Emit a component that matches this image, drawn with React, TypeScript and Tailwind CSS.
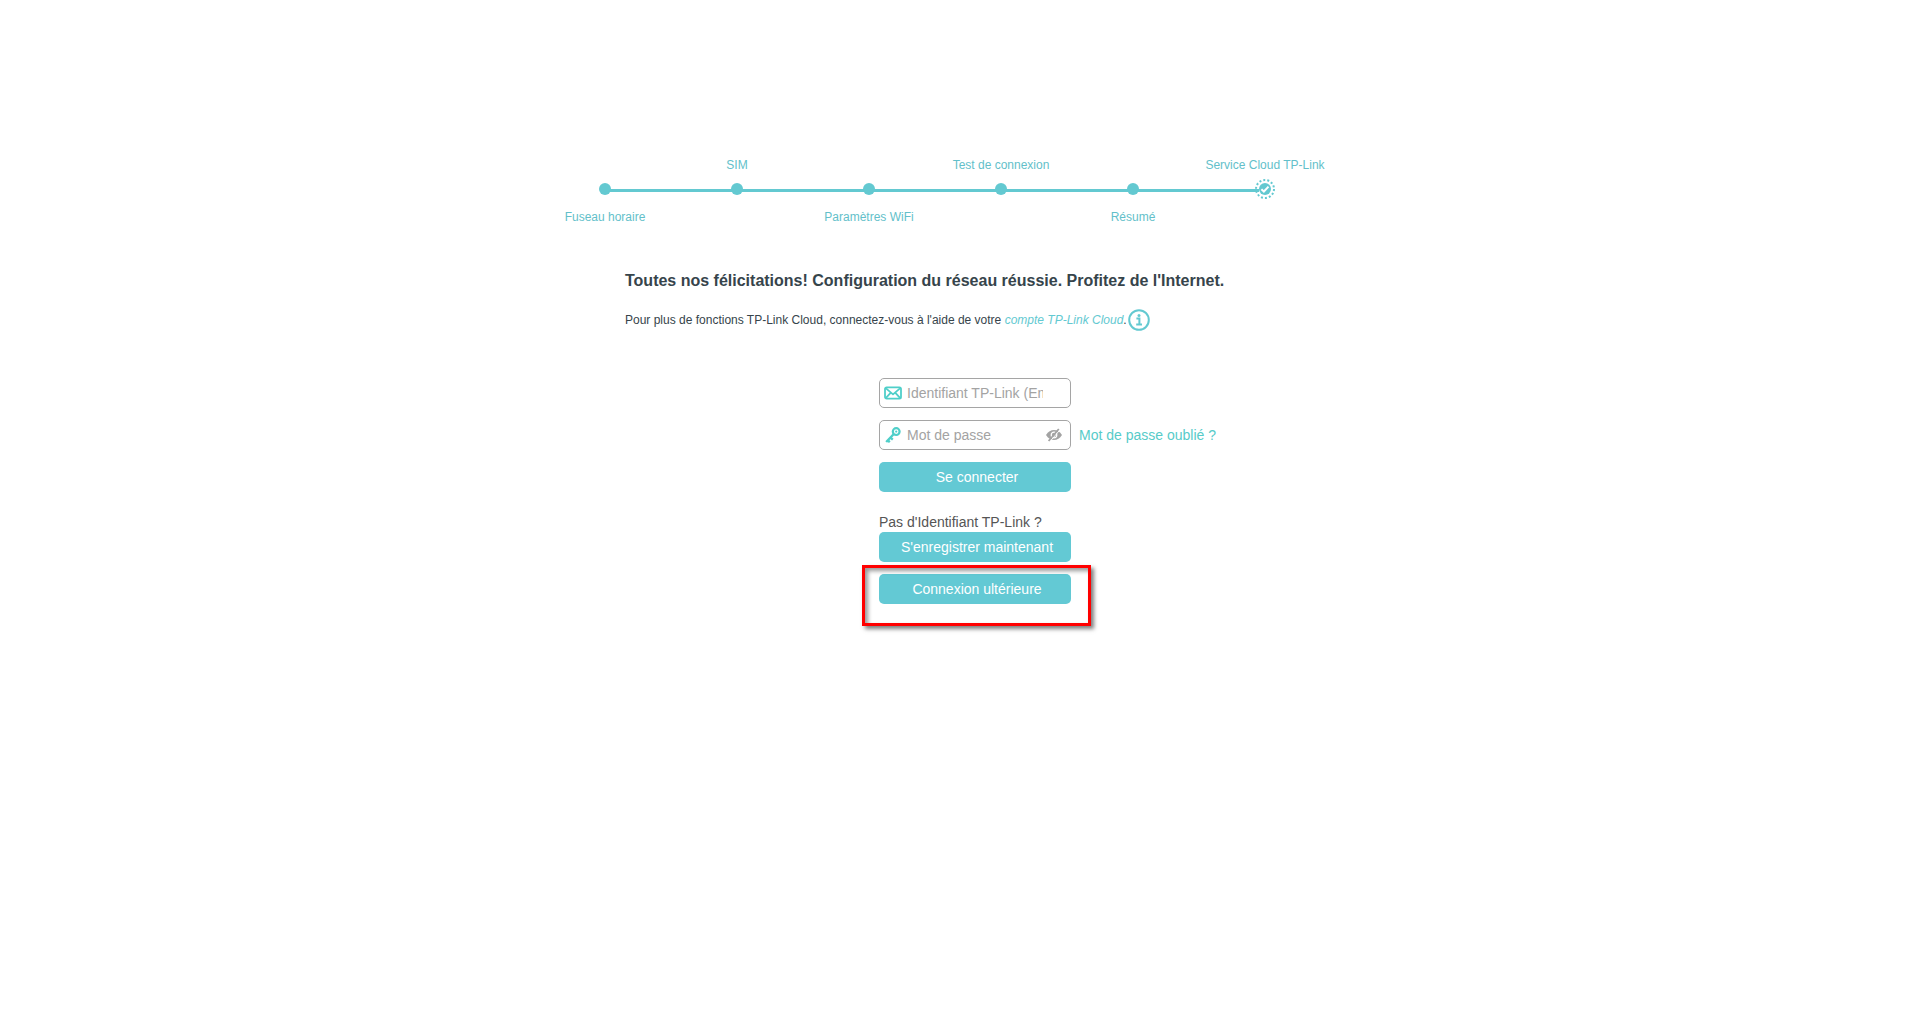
import React from "react";
import clsx from "clsx";

interface Step {
  label: string;
  position: "top" | "bottom";
}

const steps: Step[] = [
  { label: "Fuseau horaire", position: "bottom" },
  { label: "SIM", position: "top" },
  { label: "Paramètres WiFi", position: "bottom" },
  { label: "Test de connexion", position: "top" },
  { label: "Résumé", position: "bottom" },
  { label: "Service Cloud TP-Link", position: "top" },
];

const CurrentDot = () => (
  <svg viewBox="0 0 20 20" className="-mx-1 h-5 w-5 shrink-0" aria-hidden="true">
    <circle
      cx="10"
      cy="10"
      r="9"
      fill="none"
      stroke="#63c9d1"
      strokeWidth="2"
      strokeDasharray="2 2.039"
    />
    <circle cx="10" cy="10" r="6" fill="#63c9d1" />
    <path d="M6.4 10.200l2.500 2.300 4.600-4.900" fill="none" stroke="#fff" strokeWidth="2" />
  </svg>
);

const InfoIcon = () => (
  <svg viewBox="0 0 22 22" className="h-[22px] w-[22px]" aria-hidden="true">
    <circle cx="11" cy="11" r="9.800" fill="none" stroke="#63c9d1" strokeWidth="2" />
    <circle cx="11" cy="6.400" r="1.500" fill="#63c9d1" />
    <path d="M8.400 9.600h3v5.800M8.200 15.400h5.800" fill="none" stroke="#63c9d1" strokeWidth="2" />
  </svg>
);

const MailIcon = () => (
  <svg
    viewBox="0 0 18 14"
    className="h-[14px] w-[18px] shrink-0"
    fill="none"
    stroke="#4fcfc9"
    strokeWidth="1.8"
    strokeLinejoin="round"
    aria-hidden="true"
  >
    <rect x="1" y="1.4" width="16" height="11.2" rx="1.6" />
    <path d="M2 2.4l7 6 7-6M2 11.8l4.6-5M16 11.8l-4.6-5" />
  </svg>
);

const KeyIcon = () => (
  <svg
    viewBox="0 0 18 16"
    className="h-4 w-[18px] shrink-0"
    fill="none"
    stroke="#4fcfc9"
    aria-hidden="true"
  >
    <circle cx="12.2" cy="4.6" r="3.4" strokeWidth="2.2" />
    <circle cx="12.2" cy="4.6" r="1.100" fill="#4fcfc9" stroke="none" />
    <path d="M9.800 7L2.200 15M3.600 13.200l2.200 2M6.400 10.600l2.400 2" strokeWidth="2.400" />
  </svg>
);

const HiddenIcon = () => (
  <svg viewBox="0 0 16 14" className="h-[14px] w-4" fill="none" aria-hidden="true">
    <path d="M0 7C2 3.600 5 2 8 2s6 1.600 8 5c-2 3.400-5 5-8 5S2 10.400 0 7z" fill="#a3a3a3" />
    <circle cx="8" cy="7" r="2.800" stroke="#fff" strokeWidth="1.200" />
    <path d="M4 13.400L14 1.800" stroke="#fff" strokeWidth="1" />
    <path d="M2.600 13L12.800 1" stroke="#a3a3a3" strokeWidth="1.800" />
  </svg>
);

const Stepper: React.FC = () => (
  <ol className="grid grid-cols-6 text-center text-xs leading-5 text-[#63bfca]">
    {steps.map(({ label, position }, i) => {
      const isLast = i === steps.length - 1;
      return (
        <li key={label} className="flex flex-col whitespace-nowrap">
          <span className="h-5">{position === "top" && label}</span>
          <div className="flex h-7 items-center">
            <span className={clsx("mt-[3px] h-[3px] flex-1", i > 0 && "bg-[#63c9d1]")} />
            {isLast ? (
              <CurrentDot />
            ) : (
              <span className="-mx-px h-3 w-3 rounded-full bg-[#63c9d1]" />
            )}
            <span className={clsx("mt-[3px] h-[3px] flex-1", !isLast && "bg-[#63c9d1]")} />
          </div>
          <span className="mt-1 h-5">{position === "bottom" && label}</span>
        </li>
      );
    })}
  </ol>
);

interface CloudButtonProps {
  children: React.ReactNode;
  type?: "button" | "submit";
}

const CloudButton: React.FC<CloudButtonProps> = ({ children, type = "button" }) => (
  <button
    type={type}
    className="block h-[30px] w-full cursor-pointer rounded-[5px] bg-[#63c9d4] pl-1 text-white"
  >
    {children}
  </button>
);

const fieldClass =
  "flex h-[30px] w-full items-center gap-[5px] rounded-[5px] border border-[#a5a5a5] bg-white pl-1";

const inputClass =
  "w-[136px] bg-transparent text-[#666] outline-none placeholder:text-[#a3a3a3]";

const App: React.FC = () => {
  return (
    <main className="min-h-screen bg-white pt-[155px] pr-11 font-['Liberation_Sans',Arial,sans-serif] text-sm text-[#36444b]">
      <div className="mx-auto max-w-[792px]">
        <Stepper />

        <section className="pt-11 pl-[86px]">
          <h1 className="text-base leading-5 font-bold">
            Toutes nos félicitations! Configuration du réseau réussie. Profitez de l'Internet.
          </h1>
          <p className="mt-[18px] flex items-center text-xs">
            <span>
              Pour plus de fonctions TP-Link Cloud, connectez-vous à l'aide de votre{" "}
              <a href="#" className="text-[#63c9d1] italic">
                compte TP-Link Cloud
              </a>
              .
            </span>
            <button type="button" aria-label="Informations" className="ml-px">
              <InfoIcon />
            </button>
          </p>
        </section>

        <form className="mt-[47px] ml-[340px] w-48" onSubmit={(e) => e.preventDefault()}>
          <div className={fieldClass}>
            <label htmlFor="email" aria-label="Identifiant TP-Link">
              <MailIcon />
            </label>
            <input
              id="email"
              type="text"
              placeholder="Identifiant TP-Link (Email)"
              className={inputClass}
            />
          </div>

          <div className="mt-3 flex items-center">
            <div className={clsx(fieldClass, "shrink-0 pr-2")}>
              <label htmlFor="password" aria-label="Mot de passe">
                <KeyIcon />
              </label>
              <input
                id="password"
                type="password"
                placeholder="Mot de passe"
                className={clsx(inputClass, "min-w-0")}
              />
              <button type="button" aria-label="Afficher le mot de passe">
                <HiddenIcon />
              </button>
            </div>
            <a href="#" className="ml-2 whitespace-nowrap text-[#57cbc9]">
              Mot de passe oublié ?
            </a>
          </div>

          <div className="mt-3">
            <CloudButton type="submit">Se connecter</CloudButton>
          </div>

          <p className="mt-5 text-[#555]">Pas d'Identifiant TP-Link ?</p>
          <CloudButton>S'enregistrer maintenant</CloudButton>

          {/* cadre rouge autour du bouton à cliquer */}
          <div className="relative mt-3">
            <CloudButton>Connexion ultérieure</CloudButton>
            <div className="pointer-events-none absolute -top-[9px] -right-5 -bottom-[22px] -left-[17px] border-3 border-[#ff0000] shadow-[3px_3px_4px_rgba(0,0,0,0.5),inset_3px_3px_4px_rgba(0,0,0,0.4)]" />
          </div>
        </form>
      </div>
    </main>
  );
};

export default App;
